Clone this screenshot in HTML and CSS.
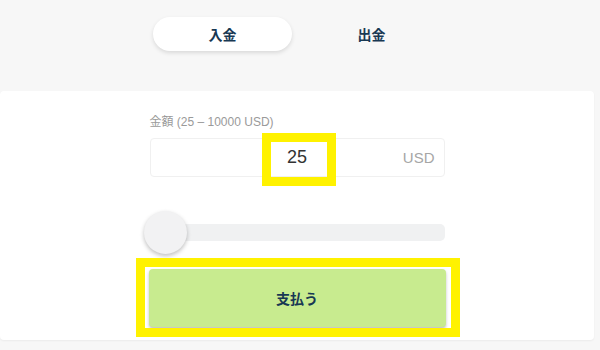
FILE: index.html
```html
<!DOCTYPE html>
<html lang="ja">
<head>
<meta charset="utf-8">
<link rel="stylesheet" href="styles.css">
</head>
<body>
<div class="tabs">
  <div class="tab active">入金</div>
  <div class="tab">出金</div>
</div>
<div class="card">
  <div class="form">
    <div class="label">金額 (25 – 10000 USD)</div>
    <div class="input">
      <span class="value">25</span>
      <span class="unit">USD</span>
      <span class="hl hl-value"></span>
    </div>
    <div class="slider">
      <div class="track"></div>
      <div class="thumb"></div>
    </div>
    <div class="btn-wrap">
      <button class="pay">支払う</button>
      <span class="hl hl-btn"></span>
    </div>
  </div>
</div>
</body>
</html>
```
FILE: styles.css
```css
html, body {
  margin: 0;
  padding: 0;
  background: #f7f7f7;
  font-family: "Liberation Sans", "Noto Sans CJK JP", sans-serif;
  width: 600px;
  height: 350px;
  overflow: hidden;
}
.tabs {
  display: flex;
  justify-content: center;
  gap: 10px;
  padding-top: 17px;
  padding-right: 6px;
}
.tab {
  width: 139px;
  height: 34px;
  border-radius: 17px;
  display: flex;
  align-items: center;
  justify-content: center;
  font-size: 14px;
  font-weight: bold;
  color: #183853;
}
.tab.active {
  background: #fff;
  box-shadow: 0 2px 4px rgba(0,0,0,0.12);
}
.card {
  margin-top: 40px;
  margin-right: 6px;
  background: #fff;
  border-radius: 4px;
  height: 249px;
  box-sizing: border-box;
  padding-top: 24px;
  box-shadow: 0 1px 2px rgba(0,0,0,0.05);
}
.form {
  width: 295px;
  margin: 0 auto;
}
.label {
  font-size: 12px;
  color: #9a9a9a;
  line-height: 14px;
}
.input {
  position: relative;
  margin-top: 9px;
  height: 39px;
  border: 1px solid #f0f0f0;
  border-radius: 4px;
  box-sizing: border-box;
  display: flex;
  align-items: center;
  justify-content: center;
}
.value {
  font-size: 18px;
  color: #333;
}
.unit {
  position: absolute;
  right: 9px;
  top: 10px;
  font-size: 15px;
  color: #a6a6a6;
}
.hl {
  position: absolute;
  border: 9px solid #fff200;
  box-sizing: border-box;
  pointer-events: none;
}
.hl-value {
  left: 111px;
  top: -6px;
  width: 74px;
  height: 53px;
}
.slider {
  position: relative;
  margin-top: 47px;
  height: 17px;
}
.track {
  height: 17px;
  background: #f0f1f2;
  border-radius: 5px;
}
.thumb {
  position: absolute;
  left: -6px;
  top: -13px;
  width: 43px;
  height: 43px;
  border-radius: 50%;
  background: #f2f2f3;
  box-shadow: 0 2px 4px rgba(0,0,0,0.25);
}
.btn-wrap {
  position: relative;
  margin-top: 28px;
}
.pay {
  display: block;
  width: 297px;
  margin-left: -1px;
  height: 58px;
  border: 0;
  border-radius: 4px;
  background: #c8eb8f;
  box-shadow: 0 2px 3px rgba(0,0,0,0.25);
  font-family: "Liberation Sans", "Noto Sans CJK JP", sans-serif;
  font-size: 14px;
  font-weight: bold;
  color: #183853;
  padding: 0;
}
.hl-btn {
  left: -14px;
  top: -11px;
  width: 324px;
  height: 79px;
}
```
